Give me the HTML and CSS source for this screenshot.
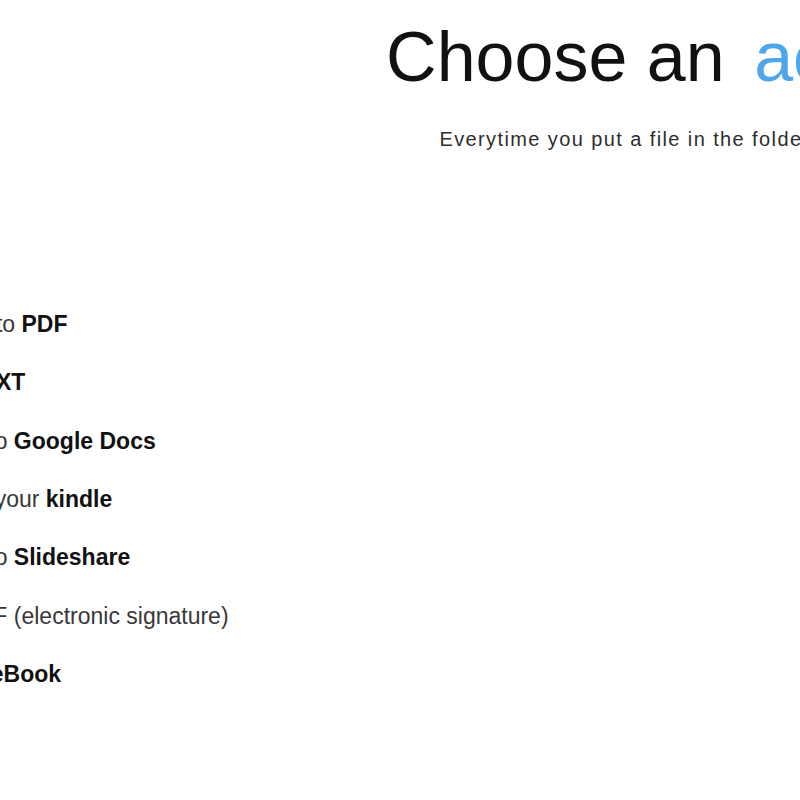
FILE: index.html
```html
<!DOCTYPE html>
<html lang="en">
  <head>
    <meta charset="utf-8">
    <title>Choose an action</title>
    <link rel="stylesheet" href="styles.css">
  </head>
  <body>
    <div class="page">
      <div class="intro">
        <h1 class="intro-title">Choose an <span class="accent">action</span></h1>
        <p class="intro-text">Everytime you put a file in the folder, it runs</p>
      </div>

      <ul class="actions">
        <li>Convert to <b>PDF</b></li>
        <li>Export <b>TXT</b></li>
        <li>Upload to <b>Google Docs</b></li>
        <li>Send to your <b>kindle</b></li>
        <li>Upload to <b>Slideshare</b></li>
        <li>Sign PDF (electronic signature)</li>
        <li>Publish <b>eBook</b></li>
      </ul>
    </div>
  </body>
</html>
```

FILE: styles.css
```css
html, body {
  margin: 0;
  padding: 0;
  background-color: #fff;
  overflow: hidden;
}
body {
  font-family: "Liberation Sans", Arial, sans-serif;
  color: #333;
}
.page {
  width: 1509px;
  margin-left: -91px;
  padding-top: 22px;
}
.intro {
  text-align: center;
}
.intro-title {
  margin: 0;
  font-size: 70px;
  line-height: 1;
  font-weight: normal;
  color: #111;
}
.accent {
  margin-left: 10px;
  color: #4ea6ec;
}
.intro-text {
  margin: 36px 0 0;
  font-size: 20px;
  line-height: 22px;
  letter-spacing: 1.4px;
  color: #2e2e2e;
}
.actions {
  list-style: none;
  margin: 145px 0 0;
  padding: 0;
}
.actions li {
  font-size: 23px;
  line-height: 58.33px;
  color: #383838;
}
.actions b {
  color: #111;
}
```
